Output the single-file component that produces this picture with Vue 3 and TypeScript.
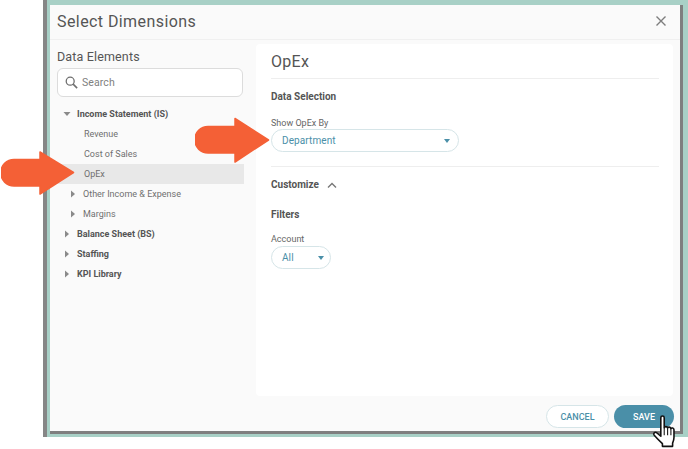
<script setup lang="ts">
interface Row { label: string; kind: 'top' | 'sub' | 'leaf'; open?: boolean; active?: boolean }
const rows: Row[] = [
  { label: 'Income Statement (IS)', kind: 'top', open: true },
  { label: 'Revenue', kind: 'leaf' },
  { label: 'Cost of Sales', kind: 'leaf' },
  { label: 'OpEx', kind: 'leaf', active: true },
  { label: 'Other Income & Expense', kind: 'sub' },
  { label: 'Margins', kind: 'sub' },
  { label: 'Balance Sheet (BS)', kind: 'top' },
  { label: 'Staffing', kind: 'top' },
  { label: 'KPI Library', kind: 'top' }
]
</script>

<template>
  <div class="page">
    <div class="frame">
      <div class="modal">
        <header class="head">
          <h1>Select Dimensions</h1>
          <svg class="close" width="12" height="12" viewBox="0 0 12 12"><path d="M1.5 1.5l9 9M10.5 1.5l-9 9" stroke="#7d7d7d" stroke-width="1.4" fill="none"/></svg>
        </header>
        <div class="body">
          <aside class="side">
            <h2>Data Elements</h2>
            <div class="search">
              <svg width="13" height="13" viewBox="0 0 15 15"><circle cx="6" cy="6" r="4.6" stroke="#6f6f6f" stroke-width="1.5" fill="none"/><path d="M9.400 9.400l4.600 4.600" stroke="#6f6f6f" stroke-width="1.8"/></svg>
              <span>Search</span>
            </div>
            <ul class="tree">
              <li v-for="r in rows" :key="r.label" :class="[r.kind, { active: r.active }]">
                <svg v-if="r.kind !== 'leaf' && r.open" class="caret" width="8" height="8" viewBox="0 0 8 8"><path d="M0.5 2h7L4 6z" fill="#8a8a8a"/></svg>
                <svg v-else-if="r.kind !== 'leaf'" class="caret" width="8" height="8" viewBox="0 0 8 8"><path d="M2 0.5v7L6 4z" fill="#8a8a8a"/></svg>
                <span>{{ r.label }}</span>
              </li>
            </ul>
          </aside>
          <main class="panel">
            <h2 class="ptitle">OpEx</h2>
            <section class="sel">
              <h3>Data Selection</h3>
              <label>Show OpEx By</label>
              <div class="pill wide"><span>Department</span><i class="tri"></i></div>
            </section>
            <section class="cust">
              <div class="custhead">
                <h3>Customize</h3>
                <svg width="10" height="7" viewBox="0 0 10 7"><path d="M1 5.500l4-4 4 4" stroke="#777" stroke-width="1.400" fill="none"/></svg>
              </div>
              <h3 class="filters">Filters</h3>
              <label>Account</label>
              <div class="pill small"><span>All</span><i class="tri"></i></div>
            </section>
          </main>
        </div>
        <footer class="foot">
          <button class="btn cancel">CANCEL</button>
          <button class="btn save">SAVE</button>
        </footer>
      </div>
    </div>

    <svg class="arrow a1" width="74" height="46" viewBox="0 0 74 46"><path d="M13 9.500H39V2L72.500 22.500 39 44V36H13A13.200 13.200 0 0 1 13 9.500Z" fill="#f46036" stroke="#f46036" stroke-linejoin="round" stroke-width="1.500"/></svg>
    <svg class="arrow a2" width="76" height="46" viewBox="0 0 76 46"><path d="M13 9.500H40V1.500L73.500 23 40 45V36H13A13.200 13.200 0 0 1 13 9.500Z" fill="#f46036" stroke="#f46036" stroke-linejoin="round" stroke-width="1.500"/></svg>
    <svg class="hand" width="28" height="34" viewBox="0 0 22 32"><path d="M8 2.500c0-2 3.200-2 3.200 0V12c.3-1.500 3-1.500 3.200.3.500-1.400 2.900-1.200 3.100.5.700-1 2.800-.7 2.900 1.200v7c0 2-.4 3.500-1.300 5.500v3H9.500v-2.500C7.500 25 4 21.500 1.800 19c-1.300-1.600.5-3.500 2.300-2.300L8 20Z" fill="#fff" stroke="#111" stroke-width="1.500" stroke-linejoin="round"/><path d="M11.200 12v7M14.400 12.500V19M17.500 13v6" stroke="#111" stroke-width="1"/></svg>
  </div>
</template>

<style>
html, body { margin: 0; background: #fff; }
</style>

<style scoped>
.page { position: relative; width: 688px; height: 449px; overflow: hidden; background: #fff; font-family: Roboto, "Liberation Sans", sans-serif; }
.frame { margin-left: 43px; width: 645px; height: 437px; box-sizing: border-box; background: #a8d0c6; padding: 5px 8px 6px 7px; box-shadow: inset 4px 0 0 #868686; }
.modal { width: 630px; height: 426px; background: #fafafa; display: flex; flex-direction: column; box-shadow: 3px 0 0 0 #7f7f7f, 0 3px 0 0 #7f7f7f, 3px 3px 0 0 #7f7f7f; }
.head { height: 35px; flex: none; box-sizing: border-box; display: flex; align-items: center; justify-content: space-between; padding: 0 13px 2px 7px; border-bottom: 1px solid #f0f0f0; }
h1 { margin: 0; font-size: 16px; font-weight: 400; color: #555; letter-spacing: .42px; }
.close { display: block; }
.body { flex: none; height: 356px; display: flex; padding-top: 4px; box-sizing: border-box; }
.side { width: 206px; flex: none; padding: 0 0 0 7px; box-sizing: border-box; }
.side h2 { margin: 5px 0 0; font-size: 12.500px; font-weight: 400; color: #555; letter-spacing: .15px; line-height: 16px; }
.search { margin-top: 3px; width: 186px; height: 29px; box-sizing: border-box; border: 1px solid #dcdcdc; border-radius: 6px; background: #fff; display: flex; align-items: center; gap: 4px; padding-left: 7px; font-size: 10.500px; color: #808080; letter-spacing: .1px; }
.tree { list-style: none; margin: 6.500px 0 0; padding: 0; width: 187px; }
.tree li { height: 20px; display: flex; align-items: center; font-size: 9px; color: #707070; }
.tree li.top { font-weight: 700; color: #555; padding-left: 6px; }
.tree li.leaf { padding-left: 27px; }
.tree li.sub { padding-left: 12px; }
.caret { margin-right: 6px; flex: none; }
.tree li.active { background: #e8e8e8; }
.panel { width: 417px; height: 352px; box-sizing: border-box; background: #fff; border-radius: 4px; padding: 0 14px 0 15px; }
.ptitle { margin: 0; height: 35px; box-sizing: border-box; padding-top: 8px; font-size: 16px; line-height: 20px; font-weight: 400; color: #555; letter-spacing: .3px; border-bottom: 1px solid #eee; }
h3 { margin: 0; font-size: 10px; line-height: 14px; font-weight: 700; color: #555; }
.sel { padding-top: 11px; height: 88px; box-sizing: border-box; border-bottom: 1px solid #eee; }
label { display: block; font-size: 9px; line-height: 12px; color: #666; }
.sel label { margin-top: 13px; }
.pill { display: flex; align-items: center; justify-content: space-between; height: 23px; box-sizing: border-box; border: 1px solid #d6e5e8; border-radius: 12px; color: #4a8fa8; font-size: 10px; letter-spacing: .1px; }
.wide { width: 188px; margin-top: 0; padding: 0 8px 0 10px; }
.small { width: 60px; margin-top: 1px; padding: 0 6px 0 10px; }
.tri { width: 0; height: 0; border-left: 3.500px solid transparent; border-right: 3.500px solid transparent; border-top: 4px solid #4a8fa8; }
.cust { padding-top: 11px; }
.custhead { display: flex; align-items: center; gap: 8px; }
.filters { margin-top: 15.500px; }
.cust label { margin-top: 11.500px; }
.foot { flex: 1; display: flex; justify-content: flex-end; align-items: center; gap: 5px; padding-right: 6px; padding-top: 6px; }
.btn { height: 23px; border-radius: 12px; font: 500 9px Roboto, sans-serif; box-sizing: border-box; padding: 0; }
.cancel { width: 63px; background: #fff; border: 1px solid #d6e5e8; color: #4a8fa8; }
.save { width: 60px; background: #4a8fa8; border: 0; color: #fff; }
.arrow { position: absolute; }
.a1 { left: 1px; top: 150px; }
.a2 { left: 195px; top: 117px; }
.hand { position: absolute; left: 650px; top: 415px; }
</style>
